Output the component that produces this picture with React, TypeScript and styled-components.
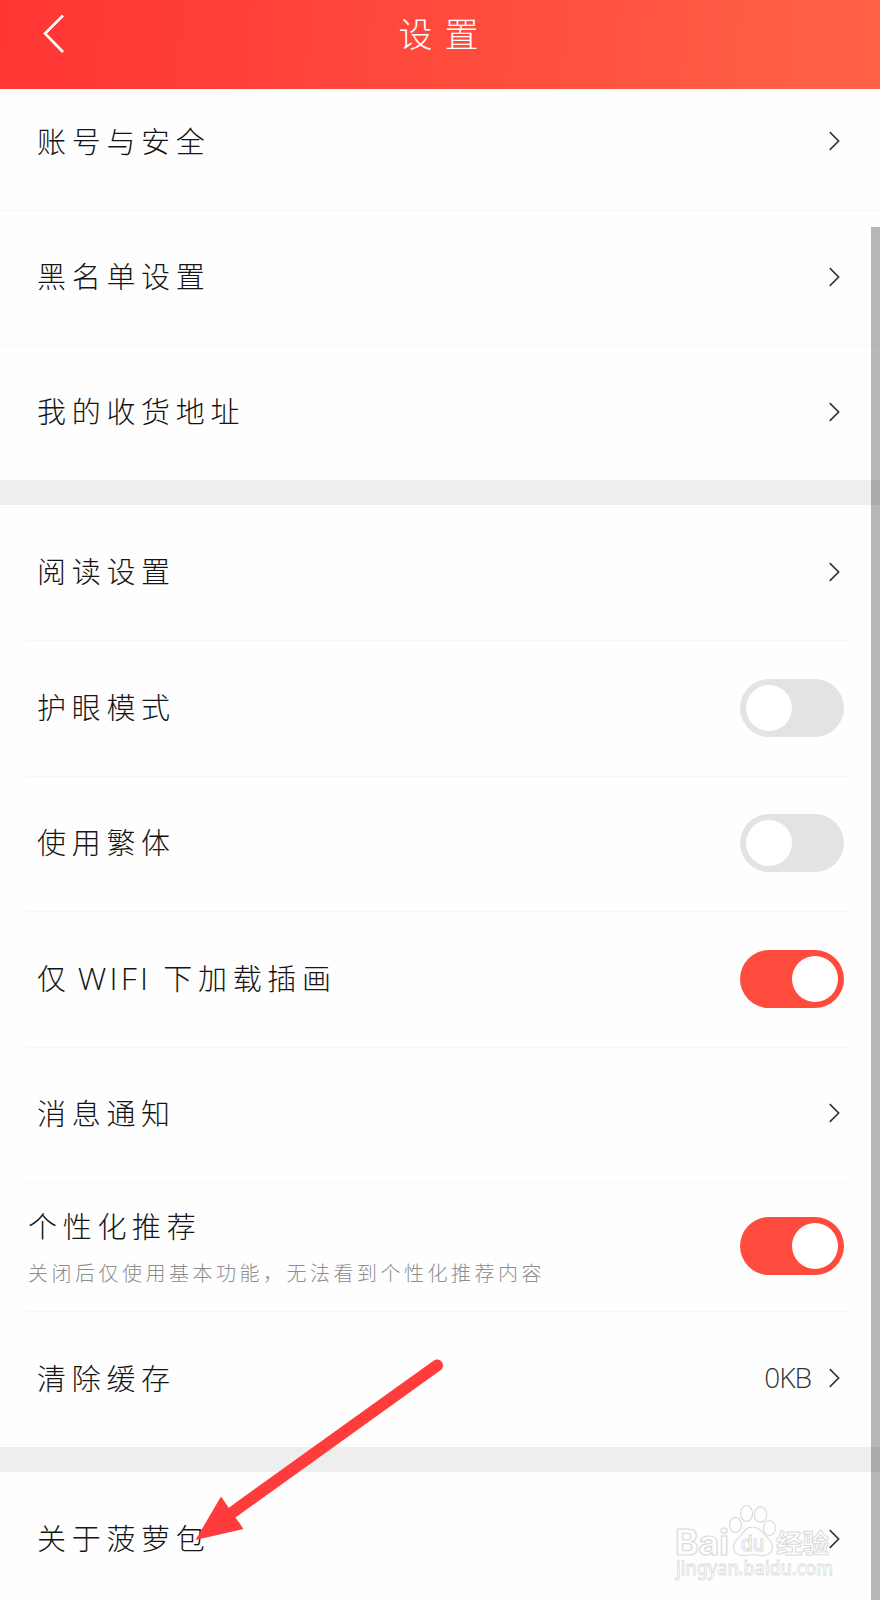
import React, { useState } from "react";
import styled, { createGlobalStyle } from "styled-components";

const GlobalStyle = createGlobalStyle`
  * { box-sizing: border-box; }
  body {
    margin: 0;
    background: #fefefe;
    font-family: "Noto Sans CJK SC", sans-serif;
    font-weight: 300;
  }
`;

const Screen = styled.main`
  position: relative;
  display: flex;
  flex-direction: column;
  width: 880px;
  height: 1600px;
  overflow: hidden;
  background: #fefefe;
`;

const Header = styled.header`
  display: grid;
  grid-template-columns: 108px 1fr 108px;
  align-items: center;
  flex: none;
  height: 89px;
  padding-bottom: 22px;
  background: linear-gradient(95deg, #ff3634 0%, #ff3f39 25%, #ff4f3e 60%, #ff6046 92%, #ff6147 100%);
`;

const BackButton = styled.button`
  display: flex;
  padding: 0 0 0 42px;
  border: 0;
  background: none;
`;

const Title = styled.h1`
  margin: 0;
  padding-bottom: 2px;
  color: #fff;
  font-size: 34px;
  font-weight: 300;
  line-height: 60px;
  letter-spacing: 12px;
  text-indent: 9px;
  text-align: center;
`;

const Group = styled.section<{ $inset?: boolean }>`
  flex: none;
  padding-left: ${(p) => (p.$inset ? 26 : 0)}px;
  padding-right: ${(p) => (p.$inset ? 32 : 0)}px;

  & + & {
    border-top: 25px solid #eeeeee;
  }
`;

const Row = styled.div<{ $height?: number; $bottom?: number; $inset?: boolean }>`
  display: flex;
  align-items: center;
  justify-content: space-between;
  height: ${(p) => p.$height ?? 135.5}px;
  padding: 0 ${(p) => (p.$inset ? 4 : 36)}px ${(p) => p.$bottom ?? 1}px ${(p) => (p.$inset ? 11 : 37)}px;

  & + & {
    border-top: 1px solid #f6f6f6;
  }
`;

const Label = styled.span`
  padding-bottom: 4px;
  color: #141414;
  font-size: 29px;
  line-height: 40px;
  letter-spacing: 5.7px;
  white-space: pre;
`;

const Latin = styled.span`
  margin: 0 12px 0 6px;
  font-family: "Open Sans", sans-serif;
  font-size: 32px;
  font-weight: 300;
  line-height: 1;
  letter-spacing: 3.2px;
`;

const Stack = styled.div`
  display: flex;
  flex-direction: column;
  gap: 10px;
  margin-left: -9px;
`;

const Hint = styled.span`
  color: #8d8d8d;
  font-size: 20px;
  line-height: 28px;
  letter-spacing: 3.5px;
  white-space: nowrap;
`;

const Trailing = styled.div`
  display: flex;
  align-items: center;
  gap: 18px;
  padding: 0 4px 1px 0;
`;

const Value = styled.span`
  padding-bottom: 3px;
  color: #333;
  font-family: "Open Sans", sans-serif;
  font-size: 28px;
  font-weight: 300;
  line-height: 36px;
  letter-spacing: -1px;
`;

const Toggle = styled.button<{ $on: boolean }>`
  display: flex;
  align-items: center;
  justify-content: ${(p) => (p.$on ? "flex-end" : "flex-start")};
  width: 104px;
  height: 58px;
  padding: 0 6px;
  border: 0;
  border-radius: 29px;
  background: ${(p) => (p.$on ? "#ff4b3e" : "#e3e3e3")};
`;

const Knob = styled.span`
  width: 46px;
  height: 46px;
  border-radius: 50%;
  background: #fff;
`;

const Scrollbar = styled.div`
  position: absolute;
  top: 227px;
  right: 0;
  bottom: 0;
  width: 9.5px;
  background: rgba(0, 0, 0, 0.28);
`;

const Pointer = styled.svg`
  position: absolute;
  left: 190px;
  top: 1352px;
`;

const Watermark = styled.svg`
  position: absolute;
  left: 670px;
  top: 1500px;
  overflow: visible;
  pointer-events: none;
`;

const Chevron = () => (
  <svg width="11" height="20" viewBox="0 0 11 20" fill="none" stroke="#38383c" strokeWidth="1.7">
    <path d="M0.800 1.200 9.600 10 0.800 18.800" />
  </svg>
);

const Switch = ({ initial }: { initial: boolean }) => {
  const [on, setOn] = useState(initial);
  return (
    <Toggle $on={on} role="switch" aria-checked={on} onClick={() => setOn(!on)}>
      <Knob />
    </Toggle>
  );
};

type LinkRowProps = {
  label: string;
  value?: string;
  height?: number;
  bottom?: number;
  inset?: boolean;
};

const LinkRow = ({ label, value, height, bottom, inset }: LinkRowProps) => (
  <Row $height={height} $bottom={bottom} $inset={inset}>
    <Label>{label}</Label>
    <Trailing>
      {value && <Value>{value}</Value>}
      <Chevron />
    </Trailing>
  </Row>
);

export default function App() {
  return (
    <Screen>
      <GlobalStyle />
      <Header>
        <BackButton>
          <svg width="24" height="40" viewBox="0 0 24 40" fill="none" stroke="#fff" strokeWidth="2.6">
            <path d="M21 1.500 3 19.500 21 38" />
          </svg>
        </BackButton>
        <Title>设置</Title>
      </Header>

      <Group>
        <LinkRow label="账号与安全" height={121} bottom={16} />
        <LinkRow label="黑名单设置" height={135} bottom={2} />
        <LinkRow label="我的收货地址" height={135} bottom={2} />
      </Group>

      <Group $inset>
        <LinkRow label="阅读设置" height={135} inset />
        <Row $inset>
          <Label>护眼模式</Label>
          <Switch initial={false} />
        </Row>
        <Row $inset>
          <Label>使用繁体</Label>
          <Switch initial={false} />
        </Row>
        <Row $inset>
          <Label>
            仅<Latin>WIFI</Latin>下加载插画
          </Label>
          <Switch initial />
        </Row>
        <LinkRow label="消息通知" bottom={2} inset />
        <Row $height={129} $bottom={2} $inset>
          <Stack>
            <Label>个性化推荐</Label>
            <Hint>关闭后仅使用基本功能，无法看到个性化推荐内容</Hint>
          </Stack>
          <Switch initial />
        </Row>
        <LinkRow label="清除缓存" value="0KB" height={136} bottom={2} inset />
      </Group>

      <Group>
        <LinkRow label="关于菠萝包" height={135} />
      </Group>

      <Scrollbar />

      <Watermark width="170" height="90" viewBox="0 0 170 90" fill="none" stroke="#dadada" strokeWidth="1.2">
        <ellipse cx="65.500" cy="25" rx="6" ry="7.700" />
        <ellipse cx="76.500" cy="13.500" rx="6" ry="8" />
        <ellipse cx="90.500" cy="14.500" rx="6.300" ry="7.700" />
        <ellipse cx="99.500" cy="28" rx="6" ry="7.500" />
        <path d="M82.500 27c-5.500 0-8 3.500-10.500 7-3 4.500-8.500 6.500-8.500 13 0 6.500 5.500 9.500 11 8.500 5.500-1 10.500-1 16 0 6 1 12-2 12-8.500 0-6.500-5.500-8.500-8.500-13-3-3.500-6-7-11.500-7Z" />
        <g fontWeight="700" fontFamily="Inter, sans-serif">
          <text x="5" y="55" fontSize="35" textLength="54" lengthAdjust="spacingAndGlyphs">Bai</text>
          <text x="71" y="51" fontSize="21" fontWeight="500" strokeWidth="1" textLength="23" lengthAdjust="spacingAndGlyphs">du</text>
        </g>
        <text x="106" y="53" fontSize="26.500" fontWeight="700" strokeWidth="1" fontFamily="Noto Sans CJK SC, sans-serif">经验</text>
        <text x="6" y="75" fontSize="19" fontWeight="500" strokeWidth="0.800" fontFamily="Noto Sans, sans-serif" textLength="157" lengthAdjust="spacingAndGlyphs">jingyan.baidu.com</text>
      </Watermark>

      <Pointer width="260" height="195" viewBox="0 0 260 195" fill="#ff3b3b">
        <path d="M43 160 247 13.500" stroke="#ff3b3b" strokeWidth="12" strokeLinecap="round" />
        <path d="M5.500 188 31 144.500 53.500 177Z" />
      </Pointer>
    </Screen>
  );
}
